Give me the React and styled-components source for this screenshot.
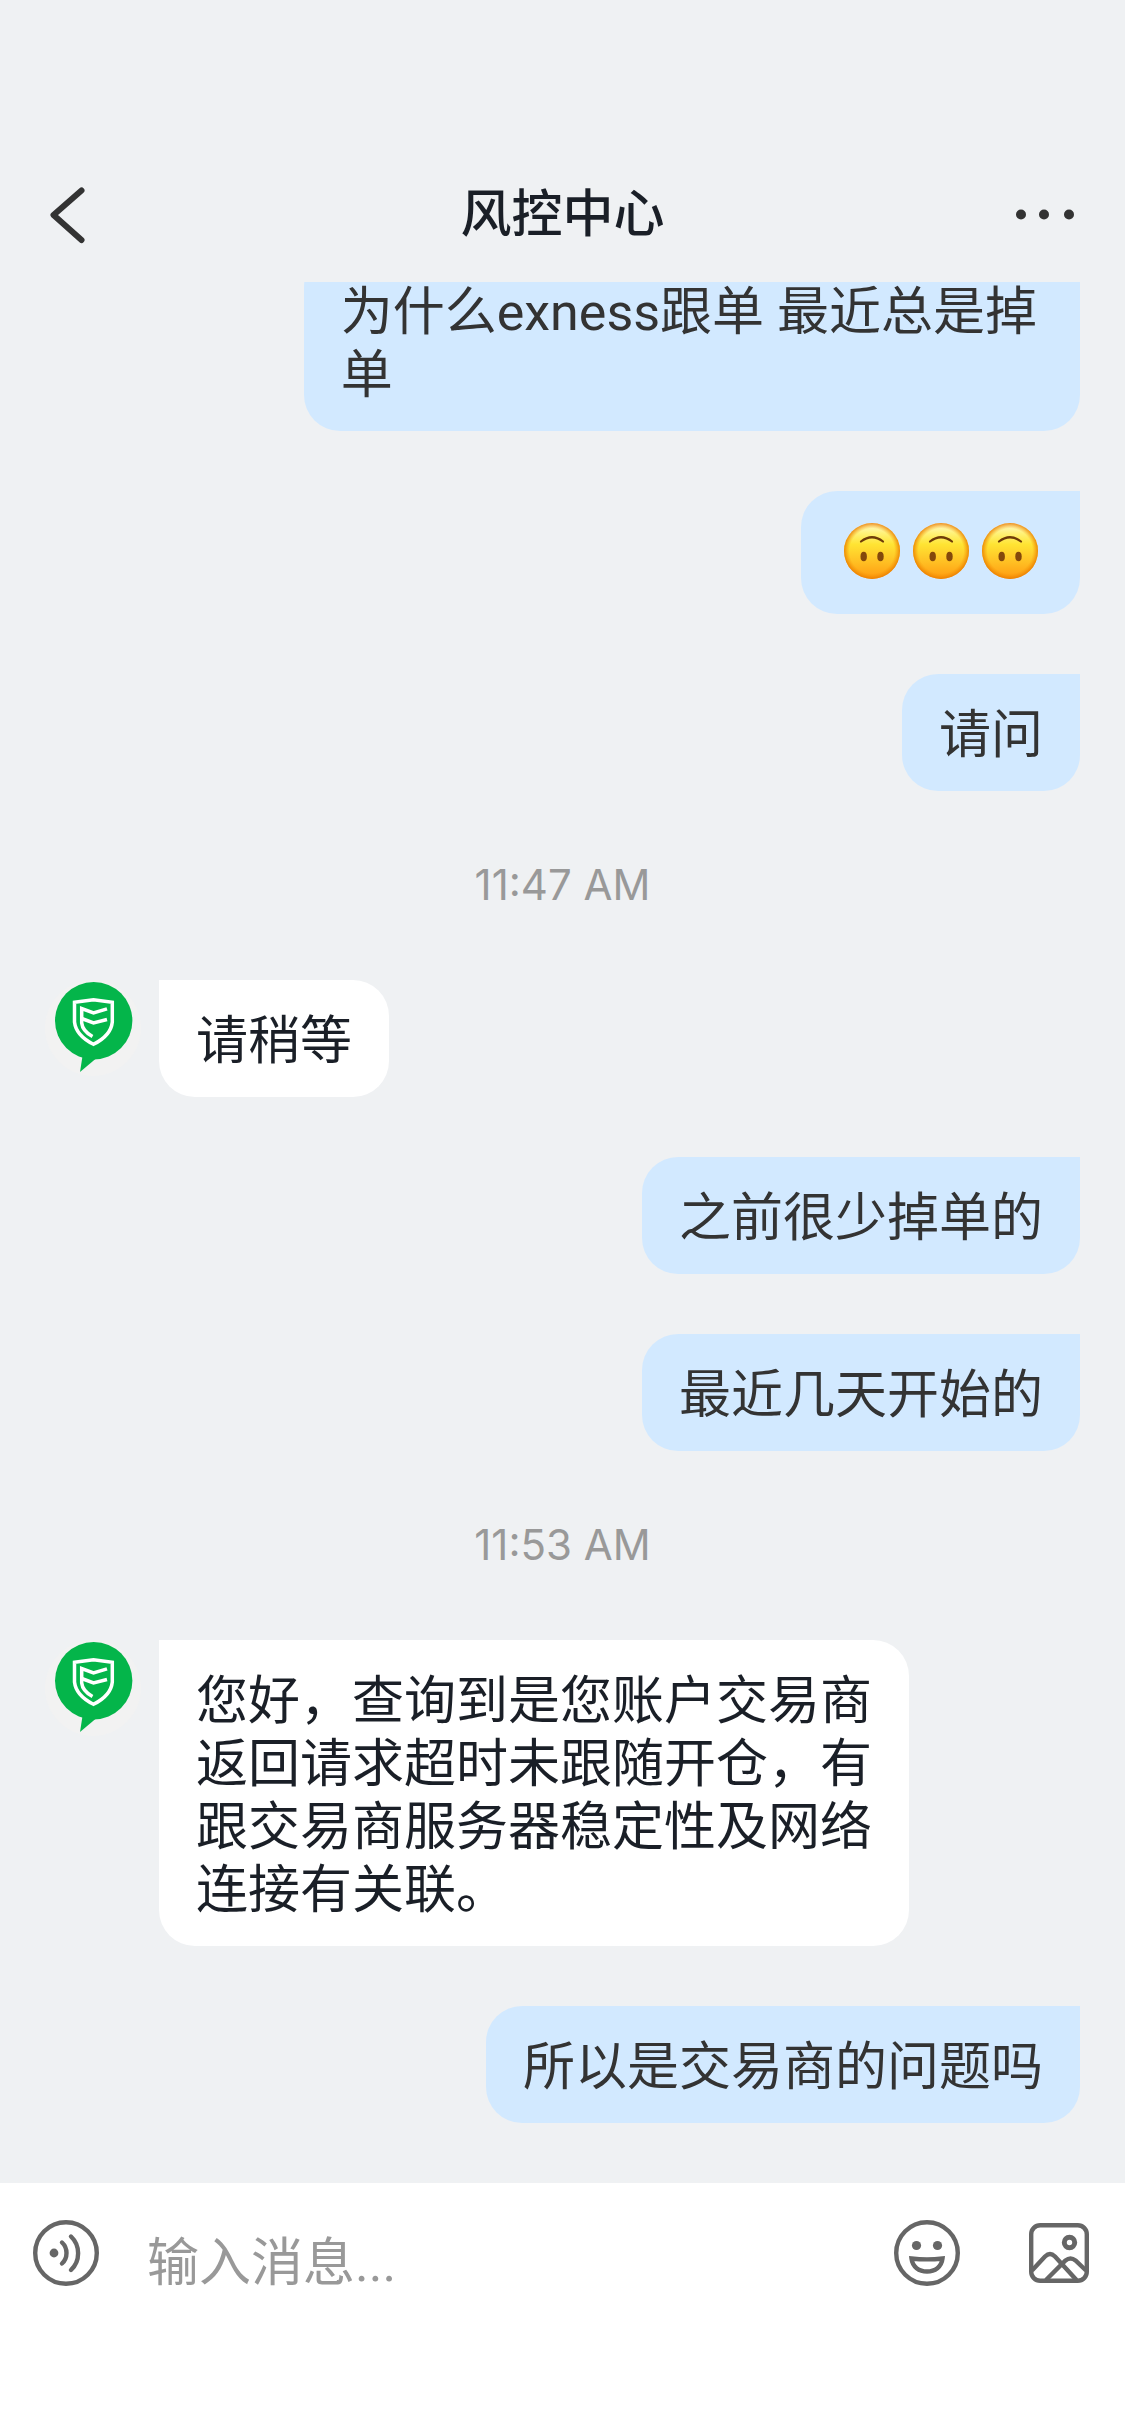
import React from "react"
import styled, { createGlobalStyle } from "styled-components"

const COLORS = {
	page: "#eff1f3",
	mine: "#d2e9ff",
	white: "#ffffff",
	ink: "#1a1f27",
	darkGray: "#333333",
	iconGray: "#666666",
	muted: "#999999",
	brand: "#04b54a",
}

const MESSAGES = [
	{ id: 1, kind: "mine", text: "为什么exness跟单 最近总是掉单" },
	{ id: 2, kind: "mine", emojis: 3 },
	{ id: 3, kind: "mine", text: "请问" },
	{ id: 4, kind: "time", text: "11:47 AM" },
	{ id: 5, kind: "agent", text: "请稍等" },
	{ id: 6, kind: "mine", text: "之前很少掉单的" },
	{ id: 7, kind: "mine", text: "最近几天开始的" },
	{ id: 8, kind: "time", text: "11:53 AM" },
	{
		id: 9,
		kind: "agent",
		text: "您好，查询到是您账户交易商返回请求超时未跟随开仓，有跟交易商服务器稳定性及网络连接有关联。",
	},
	{ id: 10, kind: "mine", text: "所以是交易商的问题吗" },
]

const App = () => (
	<>
		<GlobalStyle />
		<Page>
			<Header>
				<IconButton type="button" aria-label="返回">
					<BackIcon />
				</IconButton>
				<Title>风控中心</Title>
				<IconButton type="button" aria-label="更多">
					<MoreIcon />
				</IconButton>
			</Header>
			<MessageList>
				{MESSAGES.map(message => (
					<Message key={message.id} {...message} />
				))}
			</MessageList>
			<Composer>
				<IconButton type="button" aria-label="语音">
					<VoiceIcon />
				</IconButton>
				<MessageInput type="text" aria-label="输入消息" placeholder="输入消息..." />
				<ComposerActions>
					<IconButton type="button" aria-label="表情">
						<SmileIcon />
					</IconButton>
					<IconButton type="button" aria-label="图片">
						<PictureIcon />
					</IconButton>
				</ComposerActions>
			</Composer>
		</Page>
	</>
)

const Message = ({ kind, text, emojis }) => {
	if (kind === "time") {
		return <Timestamp>{text}</Timestamp>
	}

	if (kind === "agent") {
		return (
			<AgentRow>
				<Avatar />
				<AgentBubble>{text}</AgentBubble>
			</AgentRow>
		)
	}

	return (
		<MyRow>
			{emojis ? (
				<EmojiBubble>
					{Array.from({ length: emojis }, (_, i) => (
						<UpsideDownFace key={i} />
					))}
				</EmojiBubble>
			) : (
				<MyBubble>{text}</MyBubble>
			)}
		</MyRow>
	)
}

const BackIcon = () => (
	<svg width="78" height="66" viewBox="0 0 78 66" fill="none">
		<path
			d="M48.5 8.5 20.5 33l28 25"
			stroke={COLORS.darkGray}
			strokeWidth="6"
			strokeLinecap="round"
			strokeLinejoin="round"
		/>
	</svg>
)

const MoreIcon = () => (
	<svg width="78" height="66" viewBox="0 0 78 66" fill={COLORS.darkGray}>
		<circle cx="7" cy="32.5" r="5" />
		<circle cx="30" cy="32.5" r="5" />
		<circle cx="55" cy="32.5" r="5" />
	</svg>
)

const VoiceIcon = () => (
	<svg width="66" height="66" viewBox="0 0 66 66" fill="none" stroke={COLORS.iconGray} strokeWidth="4.4">
		<circle cx="33" cy="33" r="30.8" />
		<circle cx="21" cy="33" r="4.4" fill={COLORS.iconGray} stroke="none" />
		<path d="M29 22.5c6 5.5 6 15.5 0 21" strokeLinecap="round" />
		<path d="M38 16.5c9.5 9 9.5 24.500 0 33.5" strokeLinecap="round" />
	</svg>
)

const SmileIcon = () => (
	<svg width="66" height="66" viewBox="0 0 66 66" fill="none" stroke={COLORS.iconGray} strokeWidth="4.4">
		<circle cx="33" cy="33" r="30.8" />
		<circle cx="22.5" cy="25.5" r="4.6" fill={COLORS.iconGray} stroke="none" />
		<circle cx="43.5" cy="25.5" r="4.6" fill={COLORS.iconGray} stroke="none" />
		<path d="M17.5 38.5q15.500 1.800 31 0C47.5 47 41 51.500 33 51.500S18.5 47 17.5 38.5Z" />
	</svg>
)

const PictureIcon = () => (
	<svg width="66" height="66" viewBox="0 0 66 66" fill="none" stroke={COLORS.iconGray} strokeWidth="4.4">
		<rect x="5.2" y="5.2" width="55.6" height="55.6" rx="9" />
		<circle cx="43.5" cy="22.5" r="5.2" strokeWidth="5" />
		<path d="M6 50.5 19 36.5q5-5 10 0L50.5 60" />
		<path d="M20 60 39.5 40.5q5-4 10 0L60 50.5" />
	</svg>
)

const Avatar = () => (
	<AvatarSvg viewBox="0 0 96 96" role="img" aria-label="风控中心" fill="none">
		<circle cx="48" cy="48" r="48" fill="#f2f2f2" />
		<circle cx="48.7" cy="40.7" r="38.7" fill={COLORS.brand} />
		<path d="M37.5 76 35 92 51 78.5Z" fill={COLORS.brand} />
		<g stroke={COLORS.white} strokeWidth="3.5">
			<path d="M29.5 22.2Q39 21 48.5 19.8 58 21 67.3 22.2V42Q66 55.5 48.5 64.3 31 55.5 29.5 42Z" />
			<path d="M62 28.8 48.5 33 36.7 28.5V43Q37.500 51 47.5 56.5" />
			<path d="M36.7 38.5 48.5 43 62 39.5" />
		</g>
	</AvatarSvg>
)

const UpsideDownFace = () => (
	<svg width="69" height="69" viewBox="0 0 69 69" role="img" aria-label="🙃">
		<defs>
			<linearGradient id="faceFill" x1="0" y1="0" x2="0" y2="1">
				<stop offset="0" stopColor="#fffbd0" />
				<stop offset="0.18" stopColor="#fff27a" />
				<stop offset="0.38" stopColor="#ffe433" />
				<stop offset="0.65" stopColor="#ffc526" />
				<stop offset="1" stopColor="#ff9a10" />
			</linearGradient>
			<radialGradient id="faceEdge">
				<stop offset="0.8" stopColor="#f59300" stopOpacity="0" />
				<stop offset="1" stopColor="#e87a00" stopOpacity="0.85" />
			</radialGradient>
		</defs>
		<circle cx="35" cy="33" r="28" fill="url(#faceFill)" />
		<circle cx="35" cy="33" r="28" fill="url(#faceEdge)" />
		<path d="M24 23.5Q35 15 46 23.5" fill="none" stroke="#6e3c08" strokeWidth="2.2" strokeLinecap="round" />
		<ellipse cx="26.700" cy="38.5" rx="3.200" ry="4.700" fill="#83480c" />
		<ellipse cx="43.500" cy="38.5" rx="3.200" ry="4.700" fill="#83480c" />
	</svg>
)

const GlobalStyle = createGlobalStyle`
	* {
		box-sizing: border-box;
	}

	body {
		margin: 0;
		background-color: ${COLORS.page};
		font-family: Roboto, "Noto Sans CJK SC", sans-serif;
	}

	svg {
		display: block;
		flex-shrink: 0;
	}
`

const Page = styled.div`
	display: flex;
	flex-direction: column;
	height: 100vh;
	background-color: ${COLORS.page};
`

const Header = styled.header`
	display: flex;
	align-items: center;
	justify-content: space-between;
	flex-shrink: 0;
	padding: 182px 33px 34px;
`

const Title = styled.h1`
	margin: 0;
	font-size: 51px;
	line-height: 66px;
	font-weight: 500;
	color: ${COLORS.ink};
`

const IconButton = styled.button`
	display: flex;
	padding: 0;
	border: none;
	background: none;
	cursor: pointer;
`

/* Newest messages stick to the bottom, older ones slide under the header */
const MessageList = styled.main`
	display: flex;
	flex-direction: column;
	justify-content: flex-end;
	gap: 60px;
	flex: 1;
	min-height: 0;
	padding: 0 45px 60px;
	overflow: hidden;
`

const Row = styled.div`
	display: flex;
	align-items: flex-start;
	flex-shrink: 0;
`

const MyRow = styled(Row)`
	justify-content: flex-end;
`

const AgentRow = styled(Row)`
	gap: 18px;
`

const Bubble = styled.div`
	padding: 30px 37px 24px;
	font-size: 52px;
	line-height: 63px;
`

const MyBubble = styled(Bubble)`
	max-width: 75%;
	border-radius: 36px 0 36px 36px;
	background-color: ${COLORS.mine};
	color: ${COLORS.darkGray};
`

const EmojiBubble = styled(MyBubble)`
	display: flex;
	padding: 27px 36px;
`

const AgentBubble = styled(Bubble)`
	max-width: 750px;
	border-radius: 0 36px 36px 36px;
	background-color: ${COLORS.white};
	color: ${COLORS.ink};
`

const AvatarSvg = styled.svg`
	width: 96px;
	height: 96px;
`

const Timestamp = styled.time`
	flex-shrink: 0;
	padding-bottom: 2px;
	font-family: Inter, sans-serif;
	font-size: 42px;
	line-height: 67px;
	text-align: center;
	color: ${COLORS.muted};
`

const Composer = styled.footer`
	display: flex;
	align-items: center;
	flex-shrink: 0;
	gap: 48px;
	padding: 20px 33px 133px;
	background-color: ${COLORS.white};
`

const MessageInput = styled.input`
	flex: 1;
	min-width: 0;
	height: 100px;
	padding: 20px 0 0;
	border: none;
	outline: none;
	background: none;
	font-family: inherit;
	font-size: 52px;
	color: ${COLORS.ink};

	&::placeholder {
		color: ${COLORS.muted};
		opacity: 1;
	}
`

const ComposerActions = styled.div`
	display: flex;
	gap: 66px;
`

export default App
